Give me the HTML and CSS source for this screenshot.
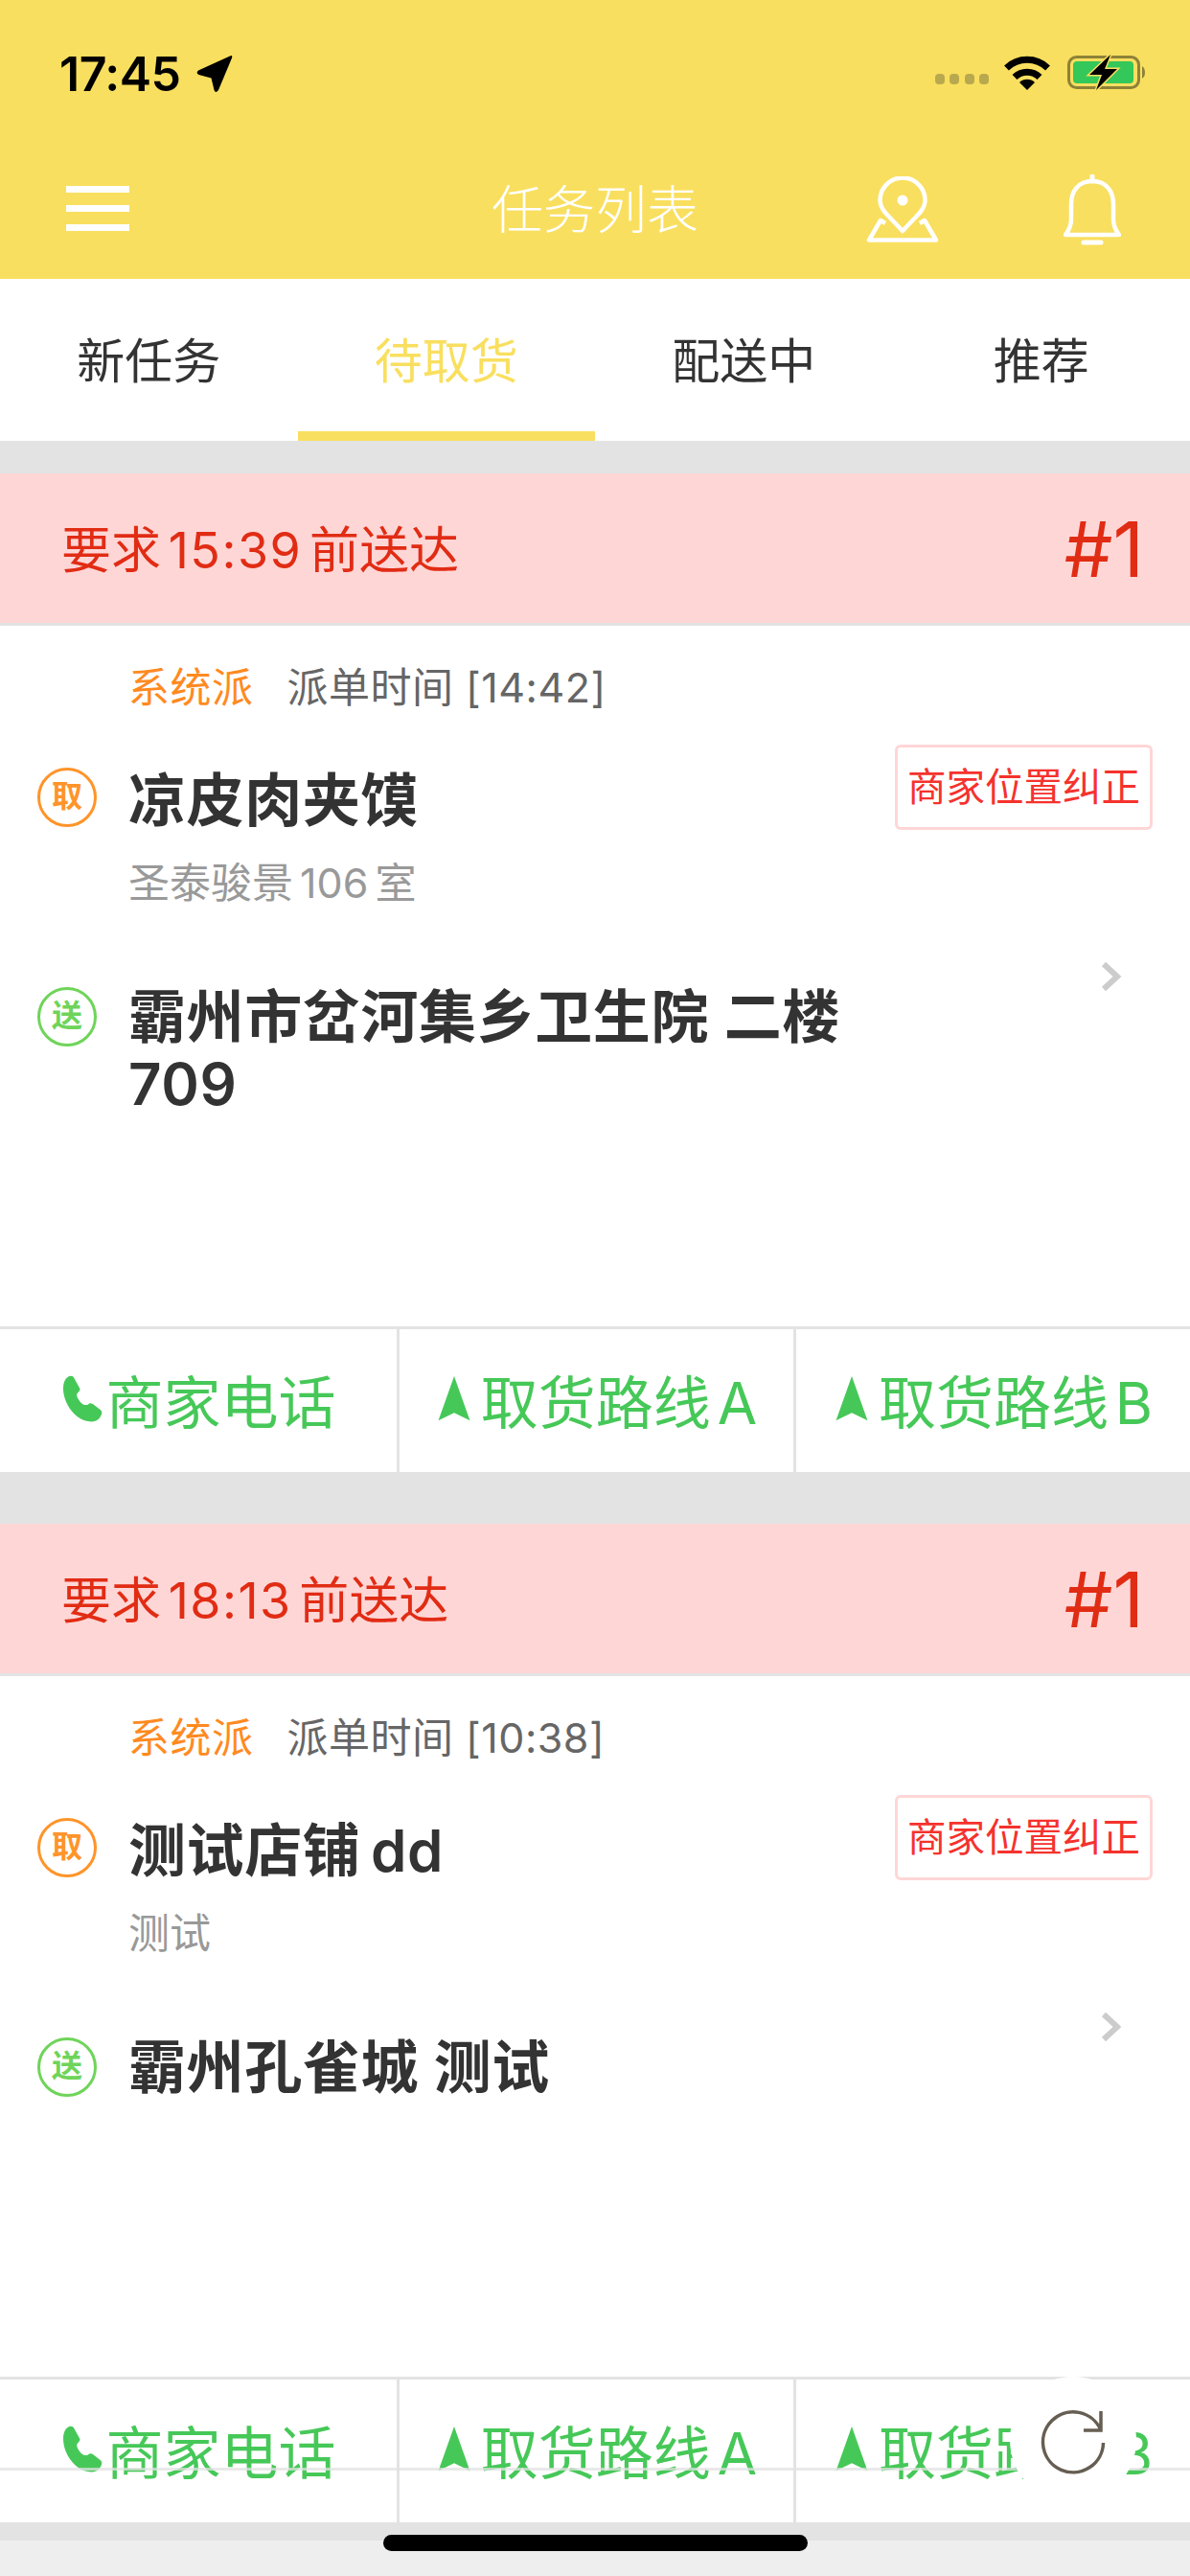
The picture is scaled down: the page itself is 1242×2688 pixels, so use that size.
FILE: index.html
```html
<!DOCTYPE html>
<html>
  <head>
    <meta charset="utf-8">
    <title>任务列表</title>
    <link rel="stylesheet" href="styles.css">
  </head>
  <body>
    <div class="page">
      <div class="header">
        <div class="status-bar">
          <div class="status-left">
            <span class="clock">17:45</span>
            <svg class="status-arrow" viewBox="0 0 38 40"><path d="M35 1.5Q38 0 37 3.5L23 37Q20 41 18.500 37L15.500 24.500 2.500 21Q-1 19 2 16.500Z"/></svg>
          </div>
          <div class="status-right">
            <div class="signal"><i></i><i></i><i></i><i></i></div>
            <svg class="wifi" viewBox="0 0 50 37">
              <path class="wifi-arc" d="M3.500 14A31 31 0 0 1 46.500 14"/>
              <path class="wifi-arc" d="M12 23.500A18.500 18.500 0 0 1 38 23.500"/>
              <path d="M25 37L17 29A11.500 11.500 0 0 1 33 29Z"/>
            </svg>
            <svg class="battery" viewBox="0 0 81 37">
              <rect x="1.500" y="2.500" width="73" height="32" rx="8" fill="none" stroke="#8e8238" stroke-width="3"/>
              <path d="M78 12Q81 14 81 18.500Q81 23 78 25Z" fill="#8e8238"/>
              <rect x="6" y="7" width="63" height="23" rx="4" fill="#34c759"/>
              <path d="M45 0L23 21H36L30 37L52 15H39Z" fill="#000" stroke="#f9df5f" stroke-width="3" paint-order="stroke"/>
            </svg>
          </div>
        </div>
        <div class="nav-bar">
          <div class="nav-left">
            <div class="menu-icon"><i></i><i></i><i></i></div>
          </div>
          <div class="nav-title">任务列表</div>
          <div class="nav-right">
            <svg class="map-icon" viewBox="0 0 76 69">
              <path d="M38 57L20 38C16 33 14.500 29 14.500 25A23.500 23.500 0 0 1 61.500 25C61.500 29 60 33 56 38Z"/>
              <circle class="icon-fill" cx="38" cy="25" r="5.500"/>
              <path d="M20 49L15 46 3 66.500H73L61 46 56 49"/>
            </svg>
            <svg class="bell-icon" viewBox="0 0 60 74">
              <path d="M30 7C15 7 8 18 8 31V47C8 54 5 59 2 63H58C55 59 52 54 52 47V31C52 18 45 7 30 7Z"/>
              <path class="bell-cap" d="M30 2V7M21 71H39"/>
            </svg>
          </div>
        </div>
      </div>

      <div class="tabs">
        <div class="tab">新任务</div>
        <div class="tab tab-active">待取货</div>
        <div class="tab">配送中</div>
        <div class="tab">推荐</div>
      </div>

      <div class="list">
        <div class="card">
          <div class="card-banner">
            <span class="due">要求 <span class="due-time">15:39</span> 前送达</span>
            <span class="rank">#1</span>
          </div>
          <div class="card-body">
            <div class="meta">
              <span class="meta-source">系统派</span>
              <span class="meta-time">派单时间 [14:42]</span>
            </div>
            <div class="stop stop-pickup">
              <span class="badge badge-pickup">取</span>
              <div class="stop-text">
                <div class="stop-name">凉皮肉夹馍</div>
                <div class="stop-address">圣泰骏景 106 室</div>
              </div>
              <div class="correct-btn">商家位置纠正</div>
            </div>
            <div class="stop stop-drop">
              <span class="badge badge-drop">送</span>
              <div class="stop-text">
                <div class="stop-name">霸州市岔河集乡卫生院 二楼709</div>
              </div>
              <svg class="chevron" viewBox="0 0 24 32"><path d="M4 3L18 16 4 29"/></svg>
            </div>
          </div>
          <div class="card-actions">
            <div class="action">
              <svg class="phone-icon" viewBox="0 0 44 52"><path d="M6 2C9 0 12 1 13 3L19 14C20 16 19 17 17 19C15 21 16 24 19 28C22 32 25 33 28 32C30 30 31 30 33 31L42 38C44 40 43 43 41 46C38 50 33 51 28 50C18 48 9 40 4 28C0 18 0 6 6 2Z"/></svg>
              <span>商家电话</span>
            </div>
            <div class="action">
              <svg class="route-icon" viewBox="0 0 37 54"><path d="M18.500 0L37 52 18.500 43 0 52Z"/></svg>
              <span>取货路线 A</span>
            </div>
            <div class="action">
              <svg class="route-icon" viewBox="0 0 37 54"><path d="M18.500 0L37 52 18.500 43 0 52Z"/></svg>
              <span>取货路线 B</span>
            </div>
          </div>
        </div>

        <div class="card">
          <div class="card-banner">
            <span class="due">要求 <span class="due-time">18:13</span> 前送达</span>
            <span class="rank">#1</span>
          </div>
          <div class="card-body">
            <div class="meta">
              <span class="meta-source">系统派</span>
              <span class="meta-time">派单时间 [10:38]</span>
            </div>
            <div class="stop stop-pickup">
              <span class="badge badge-pickup">取</span>
              <div class="stop-text">
                <div class="stop-name">测试店铺&thinsp;dd</div>
                <div class="stop-address">测试</div>
              </div>
              <div class="correct-btn">商家位置纠正</div>
            </div>
            <div class="stop stop-drop">
              <span class="badge badge-drop">送</span>
              <div class="stop-text">
                <div class="stop-name">霸州孔雀城 测试</div>
              </div>
              <svg class="chevron" viewBox="0 0 24 32"><path d="M4 3L18 16 4 29"/></svg>
            </div>
          </div>
          <div class="card-actions">
            <div class="action">
              <svg class="phone-icon" viewBox="0 0 44 52"><path d="M6 2C9 0 12 1 13 3L19 14C20 16 19 17 17 19C15 21 16 24 19 28C22 32 25 33 28 32C30 30 31 30 33 31L42 38C44 40 43 43 41 46C38 50 33 51 28 50C18 48 9 40 4 28C0 18 0 6 6 2Z"/></svg>
              <span>商家电话</span>
            </div>
            <div class="action">
              <svg class="route-icon" viewBox="0 0 37 54"><path d="M18.500 0L37 52 18.500 43 0 52Z"/></svg>
              <span>取货路线 A</span>
            </div>
            <div class="action">
              <svg class="route-icon" viewBox="0 0 37 54"><path d="M18.500 0L37 52 18.500 43 0 52Z"/></svg>
              <span>取货路线 B</span>
            </div>
          </div>
        </div>
      </div>

      <!-- things floating over the list -->
      <div class="float-line"></div>
      <div class="refresh">
        <svg viewBox="0 0 66 66">
          <path d="M63.500 33A31.500 31.500 0 1 1 61 20M61 0V20H43"/>
        </svg>
      </div>
      <div class="home-indicator"></div>
    </div>
  </body>
</html>
```

FILE: styles.css
```css
body {
  background: #eee;
  margin: 0px;
}

.page {
  color: #333;
  display: flex;
  flex-direction: column;
  font-family: Inter, "Noto Sans CJK SC", sans-serif;
  height: 2688px;
  overflow: hidden;
  position: relative;
  width: 1242px;
}


/* header */

.header {
  background: #f9df5f;
  flex: none;
  height: 291px;
}

.status-bar {
  align-items: flex-start;
  box-sizing: border-box;
  display: flex;
  height: 172px;
  justify-content: space-between;
  padding: 55px 47px 0 62px;
}

.status-left {
  align-items: center;
  display: flex;
  gap: 17px;
}

.clock {
  color: #000;
  font-size: 50px;
  font-weight: 600;
  letter-spacing: -0.500px;
  line-height: 44px;
}

.status-arrow {
  height: 40px;
  width: 38px;
}

.status-right {
  align-items: center;
  display: flex;
  height: 40px;
}

.signal {
  display: flex;
  gap: 5.500px;
  margin-right: 15px;
  margin-top: 14px;
}

.signal i {
  background: #b8a94f;
  border-radius: 4px;
  height: 11px;
  width: 10px;
}

.wifi {
  height: 37px;
  margin-right: 17px;
  width: 50px;
}

.wifi-arc {
  fill: none;
  stroke: #000;
  stroke-width: 7px;
}

.battery {
  height: 37px;
  width: 81px;
}

.nav-bar {
  align-items: center;
  color: #fff;
  display: grid;
  grid-template-columns: 1fr auto 1fr;
  height: 119px;
}

.nav-left {
  padding-bottom: 28px;
  padding-left: 69px;
}

.menu-icon {
  display: flex;
  flex-direction: column;
  gap: 13px;
  width: 66px;
}

.menu-icon i {
  background: #fff;
  height: 7px;
}

.nav-title {
  font-size: 54px;
  font-weight: 300;
  line-height: 70px;
  margin-bottom: 24px;
}

.nav-right {
  align-items: center;
  display: flex;
  gap: 130px;
  justify-content: flex-end;
  padding-bottom: 26px;
  padding-right: 72px;
}

.nav-right svg path {
  fill: none;
  stroke: #fff;
  stroke-linejoin: round;
  stroke-width: 4.500px;
}

.icon-fill {
  fill: #fff;
}

.map-icon {
  height: 69px;
  width: 76px;
}

.bell-icon {
  height: 74px;
  width: 60px;
}

.nav-right svg .bell-cap {
  stroke-linecap: round;
  stroke-width: 5px;
}


/* tabs */

.tabs {
  background: #fff;
  display: grid;
  flex: none;
  grid-template-columns: repeat(4, 1fr);
  height: 169px;
}

.tab {
  align-items: center;
  box-sizing: border-box;
  display: flex;
  font-size: 50px;
  justify-content: center;
  padding-bottom: 6px;
}

.tab-active {
  border-bottom: 10px solid #f9df5f;
  color: #f9df5f;
  padding-bottom: 0;
  padding-top: 4px;
}


/* cards */

.list {
  background: #e3e3e3;
  box-sizing: border-box;
  flex: none;
  height: 2191px;
  padding-top: 34px;
}

.card {
  margin-bottom: 54px;
}

.card-banner {
  align-items: center;
  background: #ffd6d6;
  border-bottom: 3px solid #e3e3e3;
  box-sizing: border-box;
  color: #e12c14;
  display: flex;
  height: 159px;
  justify-content: space-between;
  padding: 0 48px 0 64px;
}

.due {
  font-size: 52px;
  padding-bottom: 4px;
  word-spacing: -7px;
}

.due-time {
  letter-spacing: 1.500px;
}

.rank {
  font-size: 80px;
  font-weight: 400;
}

.card-body {
  background: #fff;
  box-sizing: border-box;
  height: 731px;
  padding: 39px 39px 0 39px;
}

.meta {
  display: flex;
  font-size: 43px;
  gap: 35px;
  letter-spacing: 0.500px;
  line-height: 50px;
  padding-left: 95px;
}

.meta-source {
  color: #ff8a1f;
}

.meta-time {
  color: #666;
}

.stop {
  align-items: flex-start;
  display: flex;
}

.stop-pickup {
  margin-top: 35px;
}

.stop-drop {
  margin-top: 55px;
}

.badge {
  border: 3px solid;
  border-radius: 50%;
  box-sizing: border-box;
  flex: none;
  font-size: 32px;
  font-weight: 700;
  height: 62px;
  line-height: 54px;
  margin-right: 33px;
  text-align: center;
  width: 62px;
}

.badge-pickup {
  color: #ff9429;
  margin-top: 24px;
}

.badge-drop {
  color: #6fd45a;
  margin-top: 29px;
}

.stop-text {
  flex: 1;
  padding-top: 23px;
}

.stop-drop .stop-text {
  max-width: 770px;
  padding-top: 25px;
}

.stop-name {
  font-size: 60px;
  font-weight: 600;
  letter-spacing: 0.600px;
  line-height: 70px;
}

.stop-address {
  color: #999;
  font-size: 43px;
  line-height: 50px;
  margin-top: 26px;
  word-spacing: -5px;
}

.correct-btn {
  border: 3px solid #ffd6d6;
  border-radius: 6px;
  box-sizing: border-box;
  color: #f5322d;
  flex: none;
  font-size: 40.500px;
  height: 89px;
  line-height: 83px;
  text-align: center;
  width: 269px;
}

.chevron {
  height: 32px;
  margin-left: auto;
  margin-right: 31px;
  margin-top: 2px;
  width: 24px;
}

.chevron path {
  fill: none;
  stroke: #ccc;
  stroke-width: 6px;
}

.card-actions {
  background: #fff;
  border-top: 3px solid #e3e3e3;
  color: #46c858;
  display: grid;
  grid-template-columns: repeat(3, 1fr);
  height: 149px;
}

.action {
  align-items: center;
  border-left: 3px solid #e3e3e3;
  box-sizing: border-box;
  display: flex;
  font-size: 60px;
  gap: 9px;
  justify-content: center;
  padding-bottom: 4px;
  word-spacing: -10px;
}

.action:first-child {
  border-left: none;
}

.action svg {
  fill: #46c858;
  flex: none;
}

.phone-icon {
  height: 50px;
  margin-right: -6px;
  width: 44px;
}

.route-icon {
  height: 48px;
  width: 38px;
}


/* floating bits */

.float-line {
  background: rgba(225, 225, 225, 0.75);
  height: 3px;
  left: 0;
  position: absolute;
  right: 0;
  top: 2575px;
}

.refresh {
  align-items: center;
  background: #fff;
  border-radius: 50%;
  display: flex;
  height: 132px;
  justify-content: center;
  left: 1054px;
  position: absolute;
  top: 2480px;
  width: 132px;
}

.refresh svg {
  height: 66px;
  margin-left: 2px;
  margin-top: 6px;
  overflow: visible;
  width: 66px;
}

.refresh path {
  fill: none;
  stroke: #665e52;
  stroke-width: 3.500px;
}

.home-indicator {
  background: #000;
  border-radius: 10px;
  height: 17px;
  left: 400px;
  position: absolute;
  top: 2645px;
  width: 443px;
}
```
